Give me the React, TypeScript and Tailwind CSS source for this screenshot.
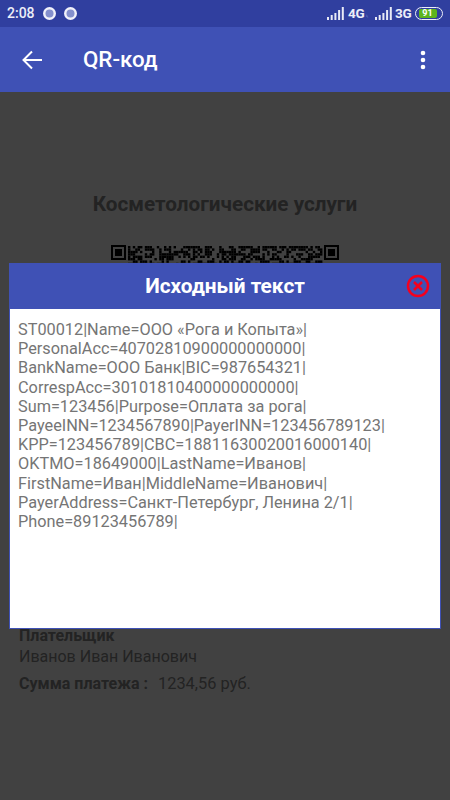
const qr: [number, number][] = [];
for (let x = 0; x < 81; x++) {
  for (let y = 0; y < 8; y++) {
    const h = Math.sin(x * 12.9898 + y * 78.233) * 43758.5453;
    if (h - Math.floor(h) < 0.55) qr.push([x, y]);
  }
}

function Finder({ x }: { x: number }) {
  return (
    <g>
      <rect x={x} y={0} width={15} height={15} fill="#000" />
      <rect x={x + 2} y={2} width={11} height={11} fill="#414141" />
      <rect x={x + 4} y={4} width={7} height={7} fill="#000" />
    </g>
  );
}

function Signal() {
  return (
    <svg width="17" height="13" viewBox="0 0 17 13" fill="#e8eaf6">
      <rect x="0" y="10" width="2" height="3" />
      <rect x="3.7" y="8" width="2" height="5" />
      <rect x="7.4" y="6" width="2" height="7" />
      <rect x="11.1" y="3" width="2" height="10" />
      <rect x="14.8" y="0" width="2" height="13" />
    </svg>
  );
}

function Dot() {
  return (
    <svg width="13" height="13" viewBox="0 0 13 13">
      <circle cx="6.5" cy="6.5" r="6.5" fill="#f1f2fa" />
      <circle cx="6.5" cy="6.5" r="4" fill="#8490cd" />
    </svg>
  );
}

const lines = [
  "ST00012|Name=ООО «Рога и Копыта»|",
  "PersonalAcc=40702810900000000000|",
  "BankName=ООО Банк|BIC=987654321|",
  "CorrespAcc=30101810400000000000|",
  "Sum=123456|Purpose=Оплата за рога|",
  "PayeeINN=1234567890|PayerINN=123456789123|",
  "KPP=123456789|CBC=18811630020016000140|",
  "OKTMO=18649000|LastName=Иванов|",
  "FirstName=Иван|MiddleName=Иванович|",
  "PayerAddress=Санкт-Петербург, Ленина 2/1|",
  "Phone=89123456789|",
];

export default function App() {
  return (
    <div className="relative w-[450px] h-[800px] overflow-hidden flex flex-col bg-[#414141] font-['Roboto',sans-serif]">
      <div className="h-[27px] shrink-0 bg-[#303f9f] flex items-center pl-[7px] pr-[7px] text-[#eceef8]">
        <span className="w-[36px] text-[14px] font-medium">2:08</span>
        <span className="mr-[8px] flex"><Dot /></span>
        <Dot />
        <div className="ml-auto flex items-center">
          <Signal />
          <span className="w-[15px] whitespace-nowrap text-[13.5px] font-bold ml-[4px] tracking-[-0.3px]">4G</span>
          <span className="text-[5px] w-[5px] text-[#8f98d0] ml-[3px] mr-[4px] mt-[5px]">ᵢₜ</span>
          <Signal />
          <span className="w-[16px] whitespace-nowrap text-[13.5px] font-bold ml-[3px] mr-[4px] tracking-[-0.3px]">3G</span>
          <div className="w-[28px] h-[13px] rounded-full border border-[#eceef8] flex items-center justify-center p-[1px]">
            <div className="w-[18px] h-[9px] mr-[3px] bg-[#5db51e] rounded-[2px] text-[9px] font-bold leading-[9px] text-center text-white">91</div>
          </div>
        </div>
      </div>
      <div className="h-[65px] shrink-0 bg-[#3f51b5] flex items-center text-white">
        <svg className="ml-[21px]" width="22" height="22" viewBox="0 0 22 22" fill="none" stroke="#fff" strokeWidth="2">
          <path d="M21 11H3" />
          <path d="M11 2.5L2.5 11L11 19.5" />
        </svg>
        <span className="ml-[40px] text-[22.3px] font-medium">QR-код</span>
        <svg className="ml-auto mr-[24.5px]" width="6" height="20" viewBox="0 0 6 20" fill="#fff">
          <circle cx="3" cy="3" r="2.3" />
          <circle cx="3" cy="10" r="2.3" />
          <circle cx="3" cy="17" r="2.3" />
        </svg>
      </div>

      <div className="flex-1 flex flex-col px-[19px]">
        <div className="mt-[98px] text-center text-[20.7px] leading-[28px] font-bold text-[#232323]">Косметологические услуги</div>
        <svg className="mt-[27px] ml-[92px]" width="228" height="228" viewBox="0 0 228 228">
          <Finder x={0} />
          <Finder x={213} />
          <g fill="#000">
            {qr.map(([x, y], i) => (
              <rect key={i} x={17 + x * 2.4} y={y * 2.4 + 1} width="2.4" height="2.4" />
            ))}
          </g>
        </svg>
        <div className="mt-[152px] text-[16px] leading-[22px] font-bold text-[#232323]">Плательщик</div>
        <div className="mt-[-1px] text-[16px] leading-[22px] text-[#232323]">Иванов Иван Иванович</div>
        <div className="mt-[5px] flex text-[16px] leading-[22px] text-[#232323]">
          <span className="font-bold">Сумма платежа&nbsp;:</span>
          <span className="ml-[10px] text-[16.4px]">1234,56 руб.</span>
        </div>
      </div>

      <div className="absolute left-[9px] top-[263px] w-[432px] h-[366px] flex flex-col border border-[#3f51b5] bg-white">
        <div className="relative h-[45px] shrink-0 bg-[#3f51b5] flex items-center justify-center text-white text-[20.8px] font-bold">
          Исходный текст
          <svg className="absolute right-[10px] top-[10px]" width="24" height="24" viewBox="0 0 24 24" fill="none" stroke="#f5001e">
            <circle cx="12" cy="12" r="10" strokeWidth="2.5" />
            <path d="M8 8L16 16M16 8L8 16" strokeWidth="2.5" />
          </svg>
        </div>
        <div className="pt-[11px] pl-[8px] text-[16.3px] leading-[19.2px] text-[#757575]">
          {lines.map((l) => (
            <div key={l}>{l}</div>
          ))}
        </div>
      </div>
    </div>
  );
}
